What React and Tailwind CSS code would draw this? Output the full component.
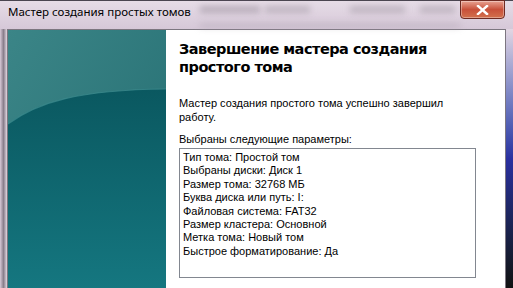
const params = [
  'Тип тома: Простой том',
  'Выбраны диски: Диск 1',
  'Размер тома: 32768 МБ',
  'Буква диска или путь: I:',
  'Файловая система: FAT32',
  'Размер кластера: Основной',
  'Метка тома: Новый том',
  'Быстрое форматирование: Да',
];

const body = { fontFamily: '"Liberation Sans", Arial, sans-serif' };

const TealPanel = () => (
  <svg width="158" height="259" viewBox="0 0 158 259" className="block shrink-0">
    <defs>
      <linearGradient id="top" x1="0" y1="0" x2="1" y2="1">
        <stop offset="0" stopColor="#3b8587" />
        <stop offset="1" stopColor="#246d71" />
      </linearGradient>
      <linearGradient id="bottom" x1="0" y1="0" x2="0" y2="1">
        <stop offset="0" stopColor="#0a5860" />
        <stop offset="1" stopColor="#157780" />
      </linearGradient>
    </defs>
    <rect width="158" height="259" fill="url(#top)" />
    <path d="M0 94 C 30 72, 70 60, 158 59 L158 259 L0 259 Z" fill="url(#bottom)" />
    <path d="M0 94 C 30 72, 70 60, 158 59" fill="none" stroke="#3f8d90" strokeWidth="1.2" opacity="0.7" />
  </svg>
);

export default function App() {
  return (
    <div className="w-[513px] h-[288px] overflow-hidden bg-[#dccfdc] flex flex-col">
      {/* title bar */}
      <div className="relative h-[29px] shrink-0 border-t border-[#4a4550] bg-gradient-to-b from-[#e6dce6] to-[#d6c8d8] flex items-start justify-between pl-[8px] pr-[8px]">
        <div className="absolute left-[200px] top-[5px] w-[60px] h-[7px] bg-[#9d93a0]/60 blur-[3px]" />
        <div className="absolute left-[265px] top-[5px] w-[45px] h-[7px] bg-[#9d93a0]/50 blur-[3px]" />
        <div className="absolute left-[350px] top-[5px] w-[55px] h-[7px] bg-[#9d93a0]/50 blur-[3px]" />
        <div className="absolute left-[420px] top-[5px] w-[35px] h-[7px] bg-[#9d93a0]/50 blur-[3px]" />
        <div className="absolute left-[200px] top-[22px] w-[260px] h-[5px] bg-[#a89eaa]/40 blur-[3px]" />
        <div
          className="relative pt-[3px] text-[11.5px] leading-[16px] text-black"
          style={{ fontFamily: '"Noto Sans", "Open Sans", sans-serif' }}
        >
          Мастер создания простых томов
        </div>
        <div className="relative -mt-px w-[45px] h-[19px] rounded-b-[4px] border border-[#6e2a22] bg-gradient-to-b from-[#e8a293] via-[#c8503a] to-[#d2704d] flex items-center justify-center shadow-[inset_0_0_0_1px_rgba(255,255,255,0.35)]">
          <svg width="13" height="10" viewBox="0 0 13 10">
            <path d="M2 1 L11 9 M11 1 L2 9" stroke="#ffffff" strokeWidth="2.4" strokeLinecap="square" />
          </svg>
        </div>
      </div>

      {/* client */}
      <div className="flex flex-1">
        <div className="w-[7px] shrink-0 bg-gradient-to-r from-[#d8cad8] via-[#8a7f8c] to-[#e2d8e2]" />
        <div className="flex flex-1 border-t border-l border-[#7c7680] bg-white">
          <TealPanel />
          <div className="flex-1 flex flex-col border-r border-[#7c7680] pl-[13px] pt-[10px]" style={body}>
            <div
              className="text-[14.5px] leading-[18px] font-bold text-black tracking-[-0.5px]"
              style={{ fontFamily: '"DejaVu Sans", Verdana, sans-serif' }}
            >
              Завершение мастера создания
              <br />
              простого тома
            </div>
            <div className="mt-[20px] text-[11px] leading-[14px] text-black">
              Мастер создания простого тома успешно завершил
              <br />
              работу.
            </div>
            <div className="mt-[8px] text-[11px] leading-[14px] text-black">Выбраны следующие параметры:</div>
            <div className="mt-[2px] w-[297px] h-[130px] border border-[#828790] px-[3px] pt-[2px] flex flex-col">
              {params.map((p) => (
                <div key={p} className="text-[11px] leading-[13.4px] text-black whitespace-nowrap">
                  {p}
                </div>
              ))}
            </div>
          </div>
        </div>
        <div className="w-[7px] shrink-0 bg-gradient-to-b from-[#e2d6e2] via-[#2a2fa0] to-[#111111]" />
      </div>
    </div>
  );
}
